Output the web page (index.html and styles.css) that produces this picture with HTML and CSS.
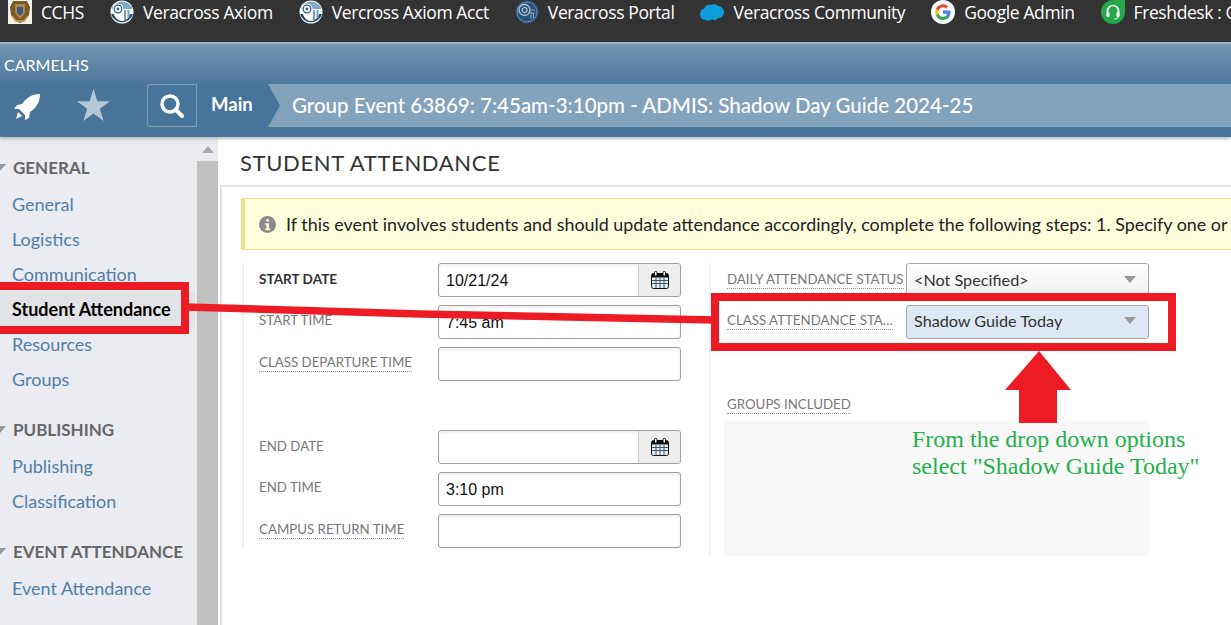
FILE: index.html
```html
<!DOCTYPE html>
<html lang="en">
<head>
    <meta charset="UTF-8">
    <title>Student Attendance</title>
    <link rel="stylesheet" href="styles.css">
</head>
<body>
<svg class="defs" width="0" height="0">
    <symbol id="column" viewBox="0 0 24 24">
        <circle cx="12" cy="12" r="11.500" fill="#fff"/>
        <path d="M1 14h3c1 4 4 7 8 7s7-3 8-7h3a11.500 11.500 0 0 1-22 0z" fill="#1f4a6e"/>
        <path d="M2 7c3-4 7-5.500 10-5.500S19 3 22 7v2H2z" fill="#7fa8c6"/>
        <circle cx="8" cy="9" r="5.500" fill="#fff"/>
        <circle cx="8" cy="9" r="3.800" fill="none" stroke="#2f6187" stroke-width="1.300"/>
        <circle cx="8" cy="9" r="1.400" fill="#2f6187"/>
        <path d="M14 10h2v10h-2zM17.500 10h2v8h-2z" fill="#6f9dbd"/>
    </symbol>
    <symbol id="calendar" viewBox="0 0 18 18">
        <rect x="0.500" y="2.500" width="17" height="15" rx="2" fill="#dfeef0" stroke="#111"/>
        <path d="M1 3h16v3.500H1z" fill="#111"/>
        <path d="M1 9.500h16M1 12.500h16M5 7v10M9 7v10M13 7v10" stroke="#456" stroke-width="1" fill="none"/>
        <rect x="3.500" y="0.500" width="2.500" height="4.500" rx="1" fill="#fff" stroke="#111"/>
        <rect x="12" y="0.500" width="2.500" height="4.500" rx="1" fill="#fff" stroke="#111"/>
    </symbol>
    <symbol id="caret" viewBox="0 0 12 7">
        <path d="M0 0h12L6 7z" fill="#999"/>
    </symbol>
</svg>

<div class="bookmarks">
    <div class="bookmark">
        <svg class="bm-icon" viewBox="0 0 24 24">
            <rect width="24" height="24" fill="#f4f1e8"/>
            <path d="M5 1h14l3 6-1 8-4 6-5 2-5-2-4-6-1-8z" fill="#7a5a2c"/>
            <path d="M7 4h10v9l-5 6-5-6z" fill="#b08a45"/>
            <path d="M9 7h6v6l-3 3-3-3z" fill="#3d5680"/>
            <path d="M4 16l4 5h8l4-5" fill="none" stroke="#c9a24a" stroke-width="1.500"/>
        </svg>
        <span>CCHS</span>
    </div>
    <div class="bookmark"><svg class="bm-icon"><use href="#column"/></svg><span>Veracross Axiom</span></div>
    <div class="bookmark"><svg class="bm-icon"><use href="#column"/></svg><span>Vercross Axiom Acct</span></div>
    <div class="bookmark">
        <svg class="bm-icon" viewBox="0 0 24 24">
            <circle cx="12" cy="12" r="11.500" fill="#2a4f78"/>
            <circle cx="12" cy="12" r="10" fill="none" stroke="#6f8fb0"/>
            <circle cx="9.500" cy="10" r="5.500" fill="none" stroke="#b9cadb" stroke-width="1.300"/>
            <circle cx="9.500" cy="10" r="2.500" fill="none" stroke="#b9cadb" stroke-width="1.200"/>
            <path d="M15 10h5M15 13h5M16 13v6M18.500 13v5" stroke="#8fa9c3" fill="none"/>
        </svg>
        <span>Veracross Portal</span>
    </div>
    <div class="bookmark">
        <svg class="bm-icon" viewBox="0 0 24 24">
            <path d="M6 20C2 20 0 17 0 14c0-3 2-5 4-5 1-3 4-5 7-4 2-1 5-1 7 1 3 0 6 3 6 6s-2 6-6 6c-1 2-4 3-6 1-2 2-5 2-6 1z" fill="#0d9dda"/>
        </svg>
        <span>Veracross Community</span>
    </div>
    <div class="bookmark">
        <svg class="bm-icon" viewBox="0 0 24 24">
            <circle cx="12" cy="12" r="12" fill="#fff"/>
            <path d="M19.500 12.300c0-.6-.1-1.200-.2-1.700H12v3.200h4.200c-.2 1-.7 1.800-1.500 2.400v2h2.500c1.500-1.300 2.300-3.400 2.300-5.900z" fill="#4285f4"/>
            <path d="M12 20c2.100 0 3.900-.7 5.200-1.900l-2.500-2c-.7.500-1.600.8-2.700.8-2.100 0-3.800-1.400-4.400-3.200H5v2A8 8 0 0 0 12 20z" fill="#34a853"/>
            <path d="M7.600 13.700a4.800 4.800 0 0 1 0-3.100v-2H5a8 8 0 0 0 0 7.200z" fill="#fbbc05"/>
            <path d="M12 7.200c1.200 0 2.200.4 3 1.200l2.200-2.200A8 8 0 0 0 5 8.600l2.600 2c.6-1.900 2.300-3.400 4.400-3.400z" fill="#ea4335"/>
        </svg>
        <span>Google Admin</span>
    </div>
    <div class="bookmark">
        <svg class="bm-icon" viewBox="0 0 24 24">
            <path d="M12 0h12v12a12 12 0 0 1-24 0A12 12 0 0 1 12 0z" fill="#25a84a"/>
            <path d="M6.500 15v-4a5.500 5.500 0 0 1 11 0v4" fill="none" stroke="#fff" stroke-width="1.700"/>
            <rect x="5.500" y="12" width="3" height="5" rx="1" fill="#fff"/>
            <rect x="15.500" y="12" width="3" height="5" rx="1" fill="#fff"/>
            <path d="M17 17c0 1.500-2 2-4 2" fill="none" stroke="#fff"/>
        </svg>
        <span>Freshdesk : C</span>
    </div>
</div>

<header class="topbar">
    <div class="org">CARMELHS</div>
    <div class="nav-row">
        <svg class="rocket" viewBox="0 0 26 26">
            <path d="M26 0C18 0 12 4 8 10L3 11 0 15h5l6 6v5l4-2 1-6c6-4 10-10 10-18z" fill="#fff"/>
            <path d="M4 18l4 4-6 3z" fill="#fff"/>
        </svg>
        <svg class="star" viewBox="0 0 34 34">
            <path d="M17 0l4 12.500 13 .1-10.500 7.800 4 12.600L17 25.300 6.500 33l4-12.600L0 12.600l13-.1z" fill="#b5c7d6"/>
        </svg>
        <div class="crumbs">
            <div class="crumb-search">
                <svg width="26" height="26" viewBox="0 0 26 26">
                    <circle cx="11" cy="11" r="8" fill="none" stroke="#fff" stroke-width="3.500"/>
                    <path d="M16.500 16.500l6.500 6.500" stroke="#fff" stroke-width="4" stroke-linecap="round"/>
                </svg>
            </div>
            <div class="crumb-main">Main</div>
            <div class="crumb-title">Group Event 63869: 7:45am-3:10pm - ADMIS: Shadow Day Guide 2024-25</div>
        </div>
    </div>
</header>

<div class="content">
    <nav class="sidebar">
        <div class="nav-group">
            <h3><svg class="nav-caret"><use href="#caret"/></svg>GENERAL</h3>
            <a>General</a>
            <a>Logistics</a>
            <a>Communication</a>
            <a class="active">Student Attendance</a>
            <a>Resources</a>
            <a>Groups</a>
        </div>
        <div class="nav-group">
            <h3><svg class="nav-caret"><use href="#caret"/></svg>PUBLISHING</h3>
            <a>Publishing</a>
            <a>Classification</a>
        </div>
        <div class="nav-group">
            <h3><svg class="nav-caret"><use href="#caret"/></svg>EVENT ATTENDANCE</h3>
            <a>Event Attendance</a>
        </div>
    </nav>
    <div class="scrollbar">
        <div class="scroll-up"><span></span></div>
    </div>

    <main class="main">
        <h1>STUDENT ATTENDANCE</h1>
        <div class="panel">
            <div class="alert">
                <svg class="alert-icon" viewBox="0 0 16 16">
                    <circle cx="8" cy="8" r="8" fill="#8a8a8a"/>
                    <rect x="6.800" y="2.800" width="2.600" height="2.600" rx="1" fill="#ffffdd"/>
                    <path d="M5.800 6.800h3.500v5h1.200v1.500H5.800v-1.500H7v-3.500H5.800z" fill="#ffffdd"/>
                </svg>
                <span>If this event involves students and should update attendance accordingly, complete the following steps: 1. Specify one or</span>
            </div>
            <div class="form">
                <div class="col col-left">
                    <div class="row">
                        <label class="strong">START DATE</label>
                        <div class="field"><span>10/21/24</span><div class="cal"><svg width="18" height="18"><use href="#calendar"/></svg></div></div>
                    </div>
                    <div class="row">
                        <label>START TIME</label>
                        <div class="field"><span>7:45 am</span></div>
                    </div>
                    <div class="row">
                        <label><u>CLASS DEPARTURE TIME</u></label>
                        <div class="field"></div>
                    </div>
                    <div class="row"></div>
                    <div class="row">
                        <label>END DATE</label>
                        <div class="field"><span></span><div class="cal"><svg width="18" height="18"><use href="#calendar"/></svg></div></div>
                    </div>
                    <div class="row">
                        <label>END TIME</label>
                        <div class="field"><span>3:10 pm</span></div>
                    </div>
                    <div class="row">
                        <label><u>CAMPUS RETURN TIME</u></label>
                        <div class="field"></div>
                    </div>
                </div>
                <div class="col col-right">
                    <div class="row">
                        <label><u>DAILY ATTENDANCE STATUS</u></label>
                        <div class="select">&lt;Not Specified&gt;<svg class="sel-caret"><use href="#caret"/></svg></div>
                    </div>
                    <div class="row">
                        <label><u>CLASS ATTENDANCE STA…</u></label>
                        <div class="select changed">Shadow Guide Today<svg class="sel-caret"><use href="#caret"/></svg></div>
                    </div>
                    <div class="groups-label"><u>GROUPS INCLUDED</u></div>
                    <div class="groups-box"></div>
                </div>
            </div>
        </div>
    </main>
</div>

<!-- red markup pasted on top of the screenshot -->
<svg class="markup" viewBox="0 0 1231 625">
    <rect x="-4" y="286" width="189" height="44" fill="none" stroke="#ed1c24" stroke-width="8"/>
    <rect x="715" y="297" width="457" height="50" fill="none" stroke="#ed1c24" stroke-width="8"/>
    <polyline points="185,307 420,314 715,320" fill="none" stroke="#ed1c24" stroke-width="7.500"/>
    <path d="M1039 351L1071 390H1057V423H1019V390H1005z" fill="#ed1c24"/>
</svg>
<div class="note">From the drop down options<br>select "Shadow Guide Today"</div>
</body>
</html>
```

FILE: styles.css
```css
body {
    position: relative;
    width: 1231px;
    height: 625px;
    margin: 0;
    overflow: hidden;
    font-family: "Lato", sans-serif;
    background: #fff;
}

.defs {
    position: absolute;
}

.bookmarks {
    display: flex;
    gap: 26px;
    height: 42px;
    padding-left: 8px;
    background: #333;
    border-bottom: 2px solid #a3b4c4;
    white-space: nowrap;
    overflow: hidden;
}

.bookmark {
    display: flex;
    gap: 9px;
    height: 24px;
    align-items: center;
    color: #fff;
    font-family: "Open Sans", sans-serif;
    font-size: 17.5px;
    letter-spacing: -.4px;
}

.bm-icon {
    width: 24px;
    height: 24px;
    flex: none;
}

.topbar {
    height: 93px;
    background: linear-gradient(to bottom, #7397b3, #4a7598 45%, #47749a);
    box-shadow: 0 2px 3px #bbb;
    position: relative;
}

.org {
    padding: 12px 0 0 4px;
    box-sizing: border-box;
    height: 40px;
    color: #fff;
    font-size: 16px;
    line-height: 18px;
}

.nav-row {
    display: flex;
    align-items: center;
    height: 43px;
}

.rocket {
    width: 26px;
    height: 26px;
    margin: 3px 0 0 14px;
}

.star {
    width: 33px;
    height: 33px;
    margin-left: 37px;
}

.crumbs {
    display: flex;
    flex: 1;
    height: 43px;
    margin-left: 37px;
    background: #83a2bc;
    border-radius: 4px 0 0 4px;
    color: #fff;
}

.crumb-search {
    display: flex;
    align-items: center;
    justify-content: center;
    width: 50px;
    box-sizing: border-box;
    background: #47749a;
    border: 1px solid #7f9db6;
    border-radius: 4px 0 0 4px;
}

.crumb-main {
    width: 83px;
    padding-left: 14px;
    box-sizing: border-box;
    background: #47749a;
    font-size: 18.5px;
    font-weight: 700;
    line-height: 40px;
    clip-path: polygon(0 0, 71px 0, 83px 50%, 71px 100%, 0 100%);
}

.crumb-title {
    padding-left: 12px;
    font-size: 20.5px;
    font-weight: 500;
    line-height: 43px;
    white-space: nowrap;
}

.content {
    display: flex;
    height: 488px;
}

.sidebar {
    width: 197px;
    flex: none;
    padding-top: 19px;
    box-sizing: border-box;
    background: #ebecf2;
}

.nav-group {
    margin-bottom: 21px;
}

.nav-group h3 {
    display: flex;
    align-items: center;
    height: 22px;
    margin: 0 0 9px;
    padding-left: 13px;
    position: relative;
    font-size: 17px;
    font-weight: 700;
    color: #666;
}

.nav-caret {
    position: absolute;
    left: -6px;
    top: 8px;
    width: 12px;
    height: 7px;
}

.nav-group a {
    display: block;
    height: 35px;
    padding-left: 12px;
    font-size: 18px;
    line-height: 35px;
    color: #4f7ea8;
}

.nav-group a.active {
    margin-right: 2px;
    color: #000;
    font-weight: 700;
    background: #e2e3e6;
}

.scrollbar {
    width: 21px;
    flex: none;
    background: #c0c0c0;
}

.scroll-up {
    display: flex;
    align-items: center;
    justify-content: center;
    height: 24px;
    background: #ebecf2;
}

.scroll-up span {
    width: 0;
    height: 0;
    border: 6px solid transparent;
    border-top: 0;
    border-bottom: 7px solid #aaa;
}

.main {
    flex: 1;
    min-width: 0;
    margin-left: 2px;
}

h1 {
    height: 48px;
    margin: 0;
    padding-left: 20px;
    font-size: 22px;
    font-weight: 400;
    line-height: 52px;
    color: #333;
    letter-spacing: .65px;
}

.panel {
    height: 440px;
    padding: 11px 0 0 19px;
    box-sizing: border-box;
    border-top: 2px solid #e4e4e4;
    border-left: 2px solid #e4e4e4;
    overflow: hidden;
}

.alert {
    display: flex;
    align-items: center;
    gap: 10px;
    height: 52px;
    padding-left: 14px;
    box-sizing: border-box;
    background: #ffffdd;
    border: 1px solid #eedf85;
    border-left-width: 4px;
    border-right: 0;
    border-radius: 3px 0 0 3px;
    font-size: 17.9px;
    color: #222;
    white-space: nowrap;
}

.alert-icon {
    width: 17px;
    height: 17px;
    flex: none;
}

.form {
    display: flex;
    margin: 13px 0 0 1px;
}

.col {
    border-left: 2px solid #f0f0f0;
}

.col-left {
    width: 439px;
    height: 285px;
    padding-left: 15px;
    box-sizing: border-box;
}

.col-right {
    width: 440px;
    height: 292px;
    margin-left: 28px;
    padding-left: 16px;
    box-sizing: border-box;
}

.row {
    display: flex;
    align-items: center;
    height: 34px;
    margin-bottom: 7.8px;
}

.row label {
    width: 179px;
    flex: none;
    padding-bottom: 3px;
    box-sizing: border-box;
    font-size: 13.3px;
    line-height: 18px;
    color: #777;
    white-space: nowrap;
}

.row label.strong {
    font-size: 13.6px;
    font-weight: 700;
    color: #333;
}

u {
    text-decoration: none;
    border-bottom: 1px dotted #999;
    padding-bottom: 1px;
}

.field {
    display: flex;
    width: 243px;
    height: 34px;
    box-sizing: border-box;
    border: 1px solid #a0a0a0;
    border-radius: 3px;
    box-shadow: inset 0 2px 3px #eee;
    font-family: "Liberation Sans", sans-serif;
    font-size: 16px;
    line-height: 34px;
    color: #111;
    overflow: hidden;
}

.field span {
    flex: 1;
    padding-left: 7px;
}

.cal {
    display: flex;
    align-items: center;
    justify-content: center;
    width: 41px;
    background: #eee;
    border-left: 1px solid #ccc;
}

.select {
    display: flex;
    align-items: center;
    justify-content: space-between;
    width: 243px;
    height: 34px;
    padding: 0 12px 2px 7px;
    box-sizing: border-box;
    border: 1px solid #a8a8a8;
    border-radius: 3px;
    background: linear-gradient(to bottom, #fff, #f0f0f0);
    font-size: 16.2px;
    color: #333;
}

.select.changed {
    background: #dde8f4;
}

.sel-caret {
    width: 12px;
    height: 7px;
    flex: none;
}

.groups-label {
    margin-top: 56px;
    font-size: 13.3px;
    line-height: 18px;
    color: #777;
}

.groups-box {
    width: 425px;
    height: 135px;
    margin: 8px 0 0 -3px;
    background: #f8f8f8;
    border-radius: 3px;
}

.markup {
    position: absolute;
    left: 0;
    top: 0;
    width: 1231px;
    height: 625px;
}

.note {
    position: absolute;
    left: 912px;
    top: 426px;
    font-family: "Liberation Serif", serif;
    font-size: 24px;
    line-height: 27px;
    color: #22b14c;
    white-space: nowrap;
}
```
